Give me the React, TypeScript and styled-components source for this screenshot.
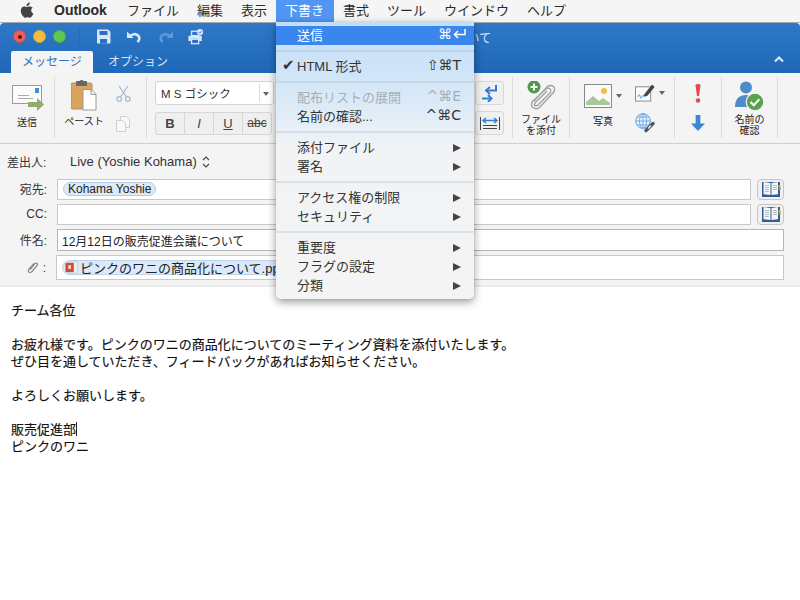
import React from "react";
import styled, { createGlobalStyle } from "styled-components";

const Global = createGlobalStyle`
  html, body { margin: 0; padding: 0; background: #fff; width: 800px; height: 600px; overflow: hidden; }
  body { font-family: "Liberation Sans", "Noto Sans CJK JP", sans-serif; color: #222; }
  * { box-sizing: border-box; }
`;

const Page = styled.div`
  position: relative;
  width: 800px;
  height: 600px;
  display: flex;
  flex-direction: column;
  overflow: hidden;
`;

const MenuBar = styled.div`
  height: 23px;
  background: #f5f5f5;
  border-bottom: 1px solid #a8a8a8;
  display: flex;
  align-items: flex-start;
  padding-left: 20px;
  font-size: 13px;
  color: #2a2a2a;
  flex: none;
`;
const AppleBox = styled.span`
  display: flex;
  width: 14px;
  margin-right: 11px;
  margin-top: 2px;
`;
const MenuTitle = styled.span<{ $w: number; $active?: boolean; $bold?: boolean }>`
  width: ${(p) => p.$w}px;
  height: 22px;
  line-height: 21px;
  padding-left: 9px;
  flex: none;
  font-size: ${(p) => (p.$bold ? 14 : 13)}px;
  font-weight: ${(p) => (p.$bold ? 700 : 400)};
  background: ${(p) => (p.$active ? "#5096f2" : "transparent")};
  color: ${(p) => (p.$active ? "#fff" : "#2a2a2a")};
`;

const TitleBar = styled.div`
  height: 50px;
  background: linear-gradient(#2f78c8, #1f68b8);
  border-radius: 4px 4px 0 0;
  position: relative;
  flex: none;
  display: flex;
  flex-direction: column;
`;
const TopRow = styled.div`
  height: 27px;
  display: flex;
  align-items: center;
  padding-left: 13px;
  position: relative;
`;
const Light = styled.span<{ $c: string; $b: string }>`
  width: 13px;
  height: 13px;
  border-radius: 50%;
  background: ${(p) => p.$c};
  border: 1px solid ${(p) => p.$b};
  margin-right: 7px;
  flex: none;
  display: flex;
  align-items: center;
  justify-content: center;
`;
const Dot = styled.span`
  width: 4px;
  height: 4px;
  border-radius: 50%;
  background: #6a1010;
`;
const QuickDivider = styled.span`
  width: 1px;
  height: 16px;
  background: #2a68ad;
  margin: 0 16px 0 6px;
`;
const QuickIcon = styled.span<{ $m: number }>`
  display: flex;
  width: 16px;
  margin-right: ${(p) => p.$m}px;
`;
const WindowName = styled.span`
  position: absolute;
  left: 0;
  right: 0;
  top: 6px;
  text-align: center;
  font-size: 12px;
  color: #dfeaf6;
`;
const TabRow = styled.div`
  height: 23px;
  display: flex;
  align-items: flex-end;
  gap: 4px;
  padding-left: 11px;
  position: relative;
`;
const Tab = styled.span<{ $active?: boolean }>`
  width: 82px;
  height: 22px;
  text-align: center;
  line-height: 23px;
  font-size: 12px;
  border-radius: 2px 2px 0 0;
  background: ${(p) => (p.$active ? "#f4f4f4" : "transparent")};
  color: ${(p) => (p.$active ? "#2a72bf" : "#d5e4f4")};
`;
const Collapse = styled.span`
  position: absolute;
  right: 16px;
  top: 6px;
  display: flex;
`;

const Ribbon = styled.div`
  height: 71px;
  background: #f4f4f4;
  border-bottom: 1px solid #cfcfcf;
  display: flex;
  flex: none;
  padding-top: 4px;
  padding-bottom: 5px;
`;
const Group = styled.div<{ $w: number }>`
  width: ${(p) => p.$w}px;
  flex: none;
  border-right: 1px solid #dcdcdc;
  position: relative;
  display: flex;
  flex-direction: column;
  align-items: center;
  font-size: 10px;
  color: #222;
`;
const RibbonLabel = styled.span`
  font-size: 10px;
  line-height: 10.5px;
  text-align: center;
  color: #222;
`;
const SendIcon = styled.span`
  display: flex;
  margin-top: 8px;
  margin-bottom: 6px;
  margin-left: 2px;
`;
const PasteGroup = styled(Group)`
  flex-direction: row;
  align-items: flex-start;
`;
const PasteMain = styled.div`
  width: 58px;
  display: flex;
  flex-direction: column;
  align-items: center;
  padding-top: 3px;
`;
const PasteLabel = styled(RibbonLabel)`
  margin-top: 6px;
`;
const PasteSide = styled.div`
  display: flex;
  flex-direction: column;
  gap: 14px;
  padding-top: 8px;
  margin-left: 3px;
`;
const FontGroup = styled.div`
  width: 366px;
  flex: none;
  border-right: 1px solid #dcdcdc;
  padding: 0 8px 0 8px;
  display: flex;
  flex-direction: column;
  justify-content: flex-start;
  position: relative;
`;
const FontSelect = styled.div`
  width: 119px;
  height: 24px;
  margin-top: 4px;
  background: #fff;
  border: 1px solid #d2d2d2;
  border-radius: 3px;
  display: flex;
  align-items: center;
  font-size: 11.5px;
  padding-left: 5px;
  color: #333;
  position: relative;
`;
const SelectDivider = styled.span`
  position: absolute;
  right: 13px;
  top: 2px;
  bottom: 2px;
  width: 1px;
  background: #dcdcdc;
`;
const Caret = styled.span`
  position: absolute;
  right: 4px;
  top: 10px;
  width: 0;
  height: 0;
  border-left: 3px solid transparent;
  border-right: 3px solid transparent;
  border-top: 4px solid #666;
`;
const FormatRow = styled.div`
  display: flex;
  margin-top: 7px;
  width: 117px;
  height: 23px;
  background: #efefef;
  border: 1px solid #d6d6d6;
  border-radius: 3px;
`;
const FormatBtn = styled.span<{ $b?: boolean; $i?: boolean; $u?: boolean; $s?: boolean }>`
  flex: 1;
  border-right: 1px solid #d6d6d6;
  text-align: center;
  line-height: 21px;
  font-size: ${(p) => (p.$s ? 12 : 13)}px;
  color: #444;
  font-weight: ${(p) => (p.$b ? 700 : 400)};
  font-style: ${(p) => (p.$i ? "italic" : "normal")};
  text-decoration: ${(p) => (p.$u ? "underline" : p.$s ? "line-through" : "none")};
  &:last-child { border-right: 0; }
`;
const SideBtn = styled.span<{ $x: number; $y: number }>`
  position: absolute;
  left: ${(p) => p.$x}px;
  top: ${(p) => p.$y}px;
  width: 29px;
  height: 24px;
  border: 1px solid #d8d8d8;
  border-radius: 3px;
  background: #f0f0f0;
  display: flex;
  align-items: center;
  justify-content: center;
`;
const AttachIcon = styled.span`
  display: flex;
  margin-top: 4px;
  margin-bottom: 4px;
`;
const PhotoGroup = styled(Group)`
  flex-direction: row;
  align-items: flex-start;
  padding: 7px 0 0 14px;
`;
const PhotoCol = styled.div`
  width: 38px;
  margin-right: 13px;
  display: flex;
  flex-direction: column;
  align-items: center;
  gap: 9px;
`;
const IconRow = styled.div`
  display: flex;
  align-items: center;
  gap: 4px;
  width: 100%;
`;
const SmallCaret = styled.span`
  width: 0;
  height: 0;
  border-left: 3px solid transparent;
  border-right: 3px solid transparent;
  border-top: 4px solid #666;
  flex: none;
`;
const ToolsCol = styled.div`
  width: 30px;
  display: flex;
  flex-direction: column;
  align-items: flex-start;
  gap: 11px;
`;
const FlagCol = styled.div`
  display: flex;
  flex-direction: column;
  align-items: center;
  gap: 12px;
  padding-top: 7px;
`;
const NameIcon = styled.span`
  display: flex;
  margin-top: 4px;
  margin-bottom: 3px;
`;

const Form = styled.div`
  height: 143px;
  background: #f4f4f4;
  border-bottom: 2px solid #eaeaea;
  padding: 10px 16px 0 0;
  display: flex;
  flex-direction: column;
  flex: none;
  font-size: 12px;
  color: #333;
`;
const FromRow = styled.div`
  display: flex;
  align-items: center;
  height: 17px;
  margin-bottom: 8px;
  padding: 0 0 2px 7px;
`;
const FromLabel = styled.span`
  width: 63px;
  color: #333;
`;
const FromValue = styled.span`
  display: flex;
  align-items: center;
  gap: 5px;
  font-size: 13px;
  color: #333;
`;
const Row = styled.div`
  display: flex;
  align-items: center;
  margin-bottom: 4px;
`;
const Label = styled.span`
  width: 47px;
  text-align: right;
  flex: none;
  margin-right: 10px;
  padding-bottom: 2px;
`;
const ClipLabel = styled.span`
  width: 46px;
  flex: none;
  margin-right: 10px;
  display: flex;
  justify-content: flex-end;
  align-items: center;
  gap: 4px;
`;
const Field = styled.div<{ $h?: number; $dark?: boolean }>`
  flex: 1;
  height: ${(p) => p.$h ?? 21}px;
  background: #fff;
  border: 1px solid ${(p) => (p.$dark ? "#b5b5b5" : "#c8c8c8")};
  display: flex;
  align-items: center;
  padding-left: 4px;
  font-size: 12px;
  color: #222;
  min-width: 0;
`;
const BookBtn = styled.span`
  width: 27px;
  height: 21px;
  margin-left: 6px;
  flex: none;
  background: #f0f0f0;
  border: 1px solid #c6c6c6;
  border-radius: 4px;
  display: flex;
  align-items: center;
  justify-content: center;
`;
const Chip = styled.span`
  height: 14px;
  line-height: 12px;
  border: 1px solid #b0cdea;
  background: #dce9f8;
  border-radius: 7px;
  padding: 0 4px;
  font-size: 12px;
  color: #222;
  margin-left: 1px;
  margin-bottom: 1px;
`;
const FileChip = styled.span`
  height: 15px;
  display: flex;
  align-items: center;
  gap: 2px;
  background: #dce9f8;
  border: 1px solid #bcd3ec;
  border-radius: 8px;
  padding-left: 2px;
  padding-right: 4px;
  font-size: 13px;
  color: #222;
  margin: 0 0 1px 1px;
  white-space: nowrap;
`;

const Body = styled.div`
  padding: 14px 0 0 11px;
  font-size: 13px;
  line-height: 17px;
  color: #111;
  font-family: "Noto Sans CJK JP", sans-serif;
  -webkit-text-stroke: 0.15px #111;
`;
const Line = styled.div`
  height: 17px;
  white-space: pre;
`;
const TextCursor = styled.span`
  display: inline-block;
  width: 1px;
  height: 14px;
  background: #222;
  vertical-align: -2px;
`;

const Menu = styled.div`
  position: absolute;
  left: 276px;
  top: 22px;
  width: 198px;
  height: 277px;
  padding: 4px 0;
  border-radius: 0 0 5px 5px;
  background: linear-gradient(#c4ddf6 0, #cfe4f8 18%, #e2edf7 35%, #f1f3f5 45%, #f4f4f4 100%);
  box-shadow: 0 3px 9px rgba(0, 0, 0, 0.4), 0 0 1px rgba(0, 0, 0, 0.3);
  font-size: 13px;
  color: #333;
`;
const Item = styled.div<{ $hi?: boolean; $off?: boolean }>`
  height: 19px;
  display: flex;
  align-items: center;
  padding: 0 13px 3px 21px;
  position: relative;
  background: ${(p) => (p.$hi ? "#3a86ec" : "transparent")};
  color: ${(p) => (p.$hi ? "#fff" : p.$off ? "#a8adb3" : "#333")};
`;
const ItemText = styled.span`
  flex: 1;
`;
const Check = styled.span`
  position: absolute;
  left: 6px;
  top: -1px;
  font-size: 15px;
  line-height: 18px;
  font-family: "DejaVu Sans", sans-serif;
`;
const Shortcut = styled.span`
  font-family: "DejaVu Sans", "Liberation Sans", sans-serif;
  font-size: 14px;
  display: flex;
  align-items: center;
  gap: 1px;
`;
const HiShortcut = styled(Shortcut)`
  margin-right: -5px;
`;
const Arrow = styled.span`
  width: 0;
  height: 0;
  border-top: 4.5px solid transparent;
  border-bottom: 4.5px solid transparent;
  border-left: 8px solid #444;
  margin-top: 3px;
`;
const Sep = styled.div`
  height: 2px;
  margin: 5px 0;
  background: rgba(150, 160, 170, 0.22);
`;

const Apple = () => (
  <svg width="14" height="16" viewBox="0 0 14 16" fill="#444">
    <path d="M9.8 0.5c.1 1-.3 1.9-.9 2.6-.6.7-1.5 1.2-2.4 1.1-.1-.9.3-1.9.9-2.5C8 1 9 .5 9.8.5zM12.9 5.6c-1.100.7-1.700 1.700-1.700 2.900 0 1.400.8 2.500 2.200 3.100-.4 1-.9 1.900-1.500 2.700-.6.8-1.200 1.400-2 1.400-.9 0-1.300-.5-2.400-.5-1.100 0-1.500.5-2.300.5-.9 0-1.500-.7-2.100-1.500C1.800 13 .8 10.700.8 8.700c0-2.700 1.700-4.200 3.500-4.200.9 0 1.800.6 2.400.6.6 0 1.600-.7 2.700-.7.9 0 2.500.3 3.500 1.200z" />
  </svg>
);
const SaveIcon = () => (
  <svg width="15" height="15" viewBox="0 0 15 15">
    <path d="M1 1.500C1 .9 1.400.5 2 .5h10l2.500 2.500v10.500c0 .6-.4 1-1 1H2c-.6 0-1-.4-1-1z" fill="#d8e6f5" />
    <rect x="3.500" y="2" width="8" height="4" fill="#2a70bd" />
    <rect x="4" y="10" width="7" height="4.500" fill="#2a70bd" />
  </svg>
);
const Undo = ({ c = "#d8e6f5", flip }: { c?: string; flip?: boolean }) => (
  <svg width="16" height="12" viewBox="0 0 16 12" fill="none">
    <g transform={flip ? "translate(16 0) scale(-1 1)" : undefined}>
      <path d="M1 .5v6.500h6.500z" fill={c} />
      <path d="M3 6c3-3.500 7-3.500 9-1.500 2 2 1.500 4.500-.5 6.500" stroke={c} strokeWidth="2.600" />
    </g>
  </svg>
);
const PrintIcon = () => (
  <svg width="18" height="18" viewBox="0 0 18 18">
    <rect x="4" y="2.500" width="8" height="5" fill="none" stroke="#d8e6f5" strokeWidth="1.500" />
    <path d="M1.500 7.500h13c.6 0 1 .4 1 1v5h-3v-2.500h-9v2.500h-3v-5c0-.6.4-1 1-1z" fill="#d8e6f5" />
    <rect x="4" y="11.500" width="8" height="5" fill="none" stroke="#d8e6f5" strokeWidth="1.500" />
    <circle cx="13.500" cy="3.500" r="3.500" fill="#d8e6f5" />
    <path d="M11.800 3.500l1.300 1.300 2.200-2.400" fill="none" stroke="#2a70bd" strokeWidth="1" />
  </svg>
);
const Chevron = () => (
  <svg width="10" height="7" viewBox="0 0 10 7" fill="none">
    <path d="M1 5.500L5 1.500l4 4" stroke="#dfeaf6" strokeWidth="2" />
  </svg>
);
const Send = () => (
  <svg width="32" height="27" viewBox="0 0 32 27">
    <rect x=".5" y=".5" width="29" height="18" fill="#fbfbfb" stroke="#999" />
    <rect x="23" y="3" width="4" height="5" fill="#3f8fdc" />
    <path d="M6 10.500h11M6 13.500h15" stroke="#aaa" strokeWidth="1" />
    <path d="M16 17h9v-4l7 6.500-7 6.500v-4h-9z" fill="#8fae6c" />
  </svg>
);
const Paste = () => (
  <svg width="26" height="31" viewBox="0 0 26 31">
    <rect x="0" y="3" width="21" height="26" rx="1.500" fill="#d9a45e" stroke="#b98a4c" />
    <rect x="5" y="1" width="11" height="5" rx="1" fill="#666" />
    <rect x="8.500" y="0" width="4" height="3" rx="1.500" fill="#666" />
    <path d="M12 9.500h8l5 5v15.500h-13z" fill="#fff" stroke="#999" />
    <path d="M20 9.500v5h5" fill="none" stroke="#999" />
  </svg>
);
const Scissors = () => (
  <svg width="15" height="17" viewBox="0 0 15 17" fill="none" stroke="#a9bccf" strokeWidth="1.300">
    <path d="M3 1l7.500 11M12 1L4.500 12" />
    <circle cx="3.200" cy="14" r="2.300" />
    <circle cx="11.800" cy="14" r="2.300" />
  </svg>
);
const Copy = () => (
  <svg width="14" height="16" viewBox="0 0 14 16" fill="#f9f9f9" stroke="#cfcfcf">
    <path d="M4.500.5h6l3 3v8h-9z" />
    <path d="M.5 4.500h6l3 3v8h-9z" />
  </svg>
);
const IndentIcon = () => (
  <svg width="15" height="17" viewBox="0 0 15 17" fill="none" stroke="#2f7fd0" strokeWidth="2">
    <path d="M14 0v5.500H5" />
    <path d="M8 2L4 5.500 8 9" />
    <path d="M0 13.500h8" />
    <path d="M6 10l3.500 3.500L6 17" />
  </svg>
);
const TableIcon = () => (
  <svg width="20" height="15" viewBox="0 0 20 15" fill="none">
    <path d="M.5 1v13M19.500 1v13" stroke="#444" />
    <path d="M3 9.500h14M3 12.500h14" stroke="#444" />
    <path d="M3 4.500h14M6 2L3 4.500 6 7M14 2l3 2.500L14 7" stroke="#2f7fd0" strokeWidth="1.500" />
  </svg>
);
const Attach = () => (
  <svg width="29" height="30" viewBox="0 0 29 30" fill="none">
    <g stroke="#a2a2a2" strokeWidth="1.400">
      <path d="M7 20L20 6c2-2 5-2 6.500-.5s1.500 4.500-.5 6.500L13 26c-2 2-5 2-7 .5s-2-4.500 0-6.500L19 8c1-1 3-1 4 0s1 3 0 4L11 24c-1 1-2 1-3 .5s-.5-2 .5-3L20 10" />
    </g>
    <circle cx="7" cy="6" r="6.500" fill="#4f9a4a" />
    <path d="M7 2.500v7M3.500 6h7" stroke="#fff" strokeWidth="2" />
  </svg>
);
const Photo = () => (
  <svg width="28" height="24" viewBox="0 0 28 24" style={{ flex: "none" }}>
    <rect x=".5" y=".5" width="27" height="23" fill="#fafafa" stroke="#888" />
    <circle cx="20" cy="7" r="3" fill="#f2bd42" />
    <path d="M2 21v-3l7-6 6 5 4-3 7 5v2z" fill="#a9c89a" />
  </svg>
);
const Signature = () => (
  <svg width="20" height="18" viewBox="0 0 21 18" style={{ flex: "none" }}>
    <rect x=".5" y="2.500" width="16" height="15" fill="#fafafa" stroke="#888" />
    <path d="M3 13c1-3 2-3 2.500 0s1.500 1 2.500-1 1 1 3 0" fill="none" stroke="#3f8fdc" />
    <path d="M10 10l7-9c1-1 4 1 3 2.500l-7 8.500-4 1z" fill="#444" />
  </svg>
);
const Link = () => (
  <svg width="21" height="20" viewBox="0 0 21 20" fill="none">
    <circle cx="8" cy="8" r="7.300" fill="#e8f1fb" stroke="#5d9fe0" />
    <path d="M.7 8h14.600M8 .7v14.600M2 4h12M2 12h12" stroke="#5d9fe0" strokeWidth=".8" />
    <ellipse cx="8" cy="8" rx="3.500" ry="7.300" stroke="#5d9fe0" strokeWidth=".8" />
    <path d="M11 17.500l7-7" stroke="#555" strokeWidth="3.500" strokeLinecap="round" />
    <path d="M13 15.500l3-3" stroke="#f4f4f4" strokeWidth="1.200" />
  </svg>
);
const Exclaim = () => (
  <svg width="6" height="19" viewBox="0 0 6 19">
    <path d="M.5 1.500C.5.500 1.500 0 3 0s2.500.5 2.500 1.500L4 12H2z" fill="#e34b4b" />
    <circle cx="3" cy="16.500" r="2.300" fill="#e34b4b" />
  </svg>
);
const Down = () => (
  <svg width="14" height="16" viewBox="0 0 15 17">
    <path d="M5 0h5v9h5l-7.500 8L0 9h5z" fill="#3a86d8" />
  </svg>
);
const Person = () => (
  <svg width="31" height="31" viewBox="0 0 31 31">
    <circle cx="12" cy="6.500" r="6" fill="#4d8cc8" />
    <path d="M1 26c0-8 4-12 11-12 6 0 10 4 10 12z" fill="#4d8cc8" />
    <circle cx="21" cy="21" r="8.800" fill="#5aa24f" stroke="#f4f4f4" strokeWidth="1.200" />
    <path d="M16.500 21l3.300 3.300 5.500-6" fill="none" stroke="#fff" strokeWidth="2" />
  </svg>
);
const UpDown = () => (
  <svg width="8" height="12" viewBox="0 0 8 12" fill="none" stroke="#444" strokeWidth="1.100">
    <path d="M1 4l3-3 3 3M1 8l3 3 3-3" />
  </svg>
);
const Clip = () => (
  <svg width="12" height="14" viewBox="0 0 12 13" fill="none" stroke="#888" strokeWidth="1.200">
    <path d="M3 8l5-6c1-1 3 0 2.500 1.500L5 10c-1 1.300-3 1.300-3.500 0S1.500 8 2 7.500l5-5.500" />
  </svg>
);
const Book = () => (
  <svg width="20" height="17" viewBox="0 0 20 17">
    <path d="M1 1h18v15H1z" fill="#2c5f96" />
    <path d="M2.500 1L9.500 2v12l-7-.8zM17 1L10.500 2v12l6.500-.8z" fill="#f6f6f6" />
    <path d="M4 4.500h4M4 6.500h4M4 8.500h4M4 10.500h4M12 4.500h4M12 6.500h4M12 8.500h4" stroke="#aaa" strokeWidth=".8" />
    <rect x="17.500" y="4" width="2" height="2.500" fill="#d9a43a" />
    <rect x="17.500" y="6.500" width="2" height="2.500" fill="#6aa84f" />
  </svg>
);
const PptIcon = () => (
  <svg width="13" height="13" viewBox="0 0 13 14">
    <rect x="3" y="1" width="10" height="12" fill="#eee" stroke="#bbb" strokeWidth=".6" />
    <rect x="0" y="2" width="9" height="10" fill="#d24a3c" />
    <rect x="3" y="4.500" width="3" height="4" fill="#f6d8d2" />
  </svg>
);
const ReturnArrow = () => (
  <svg width="13" height="10" viewBox="0 0 13 10" fill="none" stroke="#fff" strokeWidth="1.500">
    <path d="M12 0v5.500H2" />
    <path d="M5 2L1.500 5.500 5 9" />
  </svg>
);

const menuTitles: [string, number, boolean?, boolean?][] = [
  ["Outlook", 73, false, true],
  ["ファイル", 70],
  ["編集", 44],
  ["表示", 44],
  ["下書き", 58, true],
  ["書式", 44],
  ["ツール", 57],
  ["ウインドウ", 83],
  ["ヘルプ", 60],
];

const bodyLines = [
  "チーム各位",
  "",
  "お疲れ様です。ピンクのワニの商品化についてのミーティング資料を添付いたします。",
  "ぜひ目を通していただき、フィードバックがあればお知らせください。",
  "",
  "よろしくお願いします。",
  "",
];

export default function App() {
  return (
    <Page>
      <Global />
      <MenuBar>
        <AppleBox><Apple /></AppleBox>
        {menuTitles.map(([t, w, a, b]) => (
          <MenuTitle key={t} $w={w} $active={a} $bold={b}>{t}</MenuTitle>
        ))}
      </MenuBar>
      <TitleBar>
        <TopRow>
          <Light $c="#ee5f5a" $b="#d64a45"><Dot /></Light>
          <Light $c="#f5bd3a" $b="#dca52e" />
          <Light $c="#5fc850" $b="#4caf3f" />
          <QuickDivider />
          <QuickIcon $m={14}><SaveIcon /></QuickIcon>
          <QuickIcon $m={16}><Undo /></QuickIcon>
          <QuickIcon $m={14}><Undo c="#5f9ad6" flip /></QuickIcon>
          <QuickIcon $m={0}><PrintIcon /></QuickIcon>
          <WindowName>12月12日の販売促進会議について</WindowName>
        </TopRow>
        <TabRow>
          <Tab $active>メッセージ</Tab>
          <Tab>オプション</Tab>
          <Collapse><Chevron /></Collapse>
        </TabRow>
      </TitleBar>
      <Ribbon>
        <Group $w={55}>
          <SendIcon><Send /></SendIcon>
          <RibbonLabel>送信</RibbonLabel>
        </Group>
        <PasteGroup $w={92}>
          <PasteMain>
            <Paste />
            <PasteLabel>ペースト</PasteLabel>
          </PasteMain>
          <PasteSide>
            <Scissors />
            <Copy />
          </PasteSide>
        </PasteGroup>
        <FontGroup>
          <FontSelect>M S ゴシック<SelectDivider /><Caret /></FontSelect>
          <FormatRow>
            <FormatBtn $b>B</FormatBtn>
            <FormatBtn $i>I</FormatBtn>
            <FormatBtn $u>U</FormatBtn>
            <FormatBtn $s>abc</FormatBtn>
          </FormatRow>
          <SideBtn $x={328} $y={4}><IndentIcon /></SideBtn>
          <SideBtn $x={328} $y={34}><TableIcon /></SideBtn>
        </FontGroup>
        <Group $w={57}>
          <AttachIcon><Attach /></AttachIcon>
          <RibbonLabel>ファイル<br />を添付</RibbonLabel>
        </Group>
        <PhotoGroup $w={105}>
          <PhotoCol>
            <IconRow><Photo /><SmallCaret /></IconRow>
            <RibbonLabel>写真</RibbonLabel>
          </PhotoCol>
          <ToolsCol>
            <IconRow><Signature /><SmallCaret /></IconRow>
            <Link />
          </ToolsCol>
        </PhotoGroup>
        <Group $w={47}>
          <FlagCol><Exclaim /><Down /></FlagCol>
        </Group>
        <Group $w={56}>
          <NameIcon><Person /></NameIcon>
          <RibbonLabel>名前の<br />確認</RibbonLabel>
        </Group>
      </Ribbon>
      <Form>
        <FromRow>
          <FromLabel>差出人:</FromLabel>
          <FromValue>Live (Yoshie Kohama) <UpDown /></FromValue>
        </FromRow>
        <Row>
          <Label>宛先:</Label>
          <Field><Chip>Kohama Yoshie</Chip></Field>
          <BookBtn><Book /></BookBtn>
        </Row>
        <Row>
          <Label>CC:</Label>
          <Field />
          <BookBtn><Book /></BookBtn>
        </Row>
        <Row>
          <Label>件名:</Label>
          <Field $dark $h={22}>12月12日の販売促進会議について</Field>
        </Row>
        <Row>
          <ClipLabel><Clip />:</ClipLabel>
          <Field $h={25}>
            <FileChip><PptIcon />ピンクのワニの商品化について.pptx</FileChip>
          </Field>
        </Row>
      </Form>
      <Body>
        {bodyLines.map((l, i) => <Line key={i}>{l}</Line>)}
        <Line>販売促進部<TextCursor /></Line>
        <Line>ピンクのワニ</Line>
      </Body>
      <Menu>
        <Item $hi><ItemText>送信</ItemText><HiShortcut>⌘<ReturnArrow /></HiShortcut></Item>
        <Sep />
        <Item><Check>✔</Check><ItemText>HTML 形式</ItemText><Shortcut>⇧⌘T</Shortcut></Item>
        <Sep />
        <Item $off><ItemText>配布リストの展開</ItemText><Shortcut>^⌘E</Shortcut></Item>
        <Item><ItemText>名前の確認...</ItemText><Shortcut>^⌘C</Shortcut></Item>
        <Sep />
        <Item><ItemText>添付ファイル</ItemText><Arrow /></Item>
        <Item><ItemText>署名</ItemText><Arrow /></Item>
        <Sep />
        <Item><ItemText>アクセス権の制限</ItemText><Arrow /></Item>
        <Item><ItemText>セキュリティ</ItemText><Arrow /></Item>
        <Sep />
        <Item><ItemText>重要度</ItemText><Arrow /></Item>
        <Item><ItemText>フラグの設定</ItemText><Arrow /></Item>
        <Item><ItemText>分類</ItemText><Arrow /></Item>
      </Menu>
    </Page>
  );
}
